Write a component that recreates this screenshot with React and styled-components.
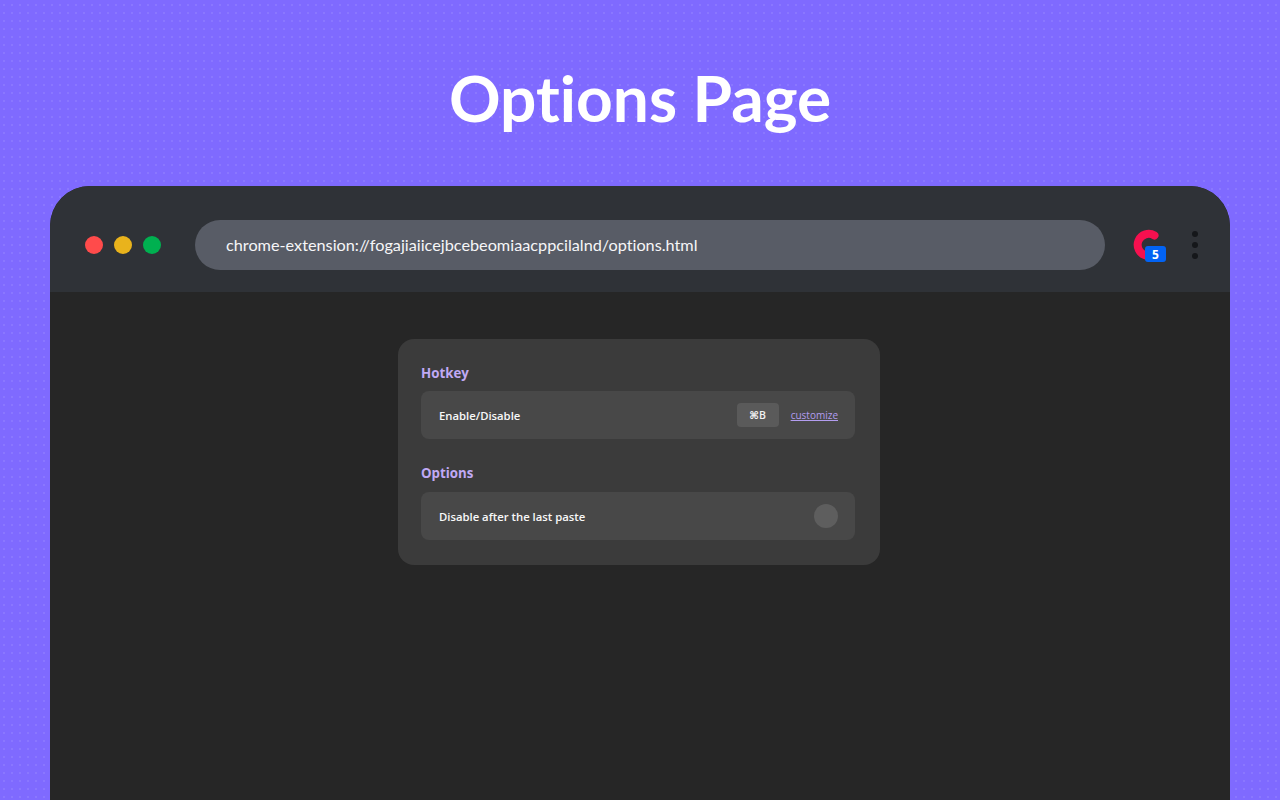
import styled, { createGlobalStyle } from 'styled-components'

const GlobalStyle = createGlobalStyle`
  html, body {
    margin: 0;
    padding: 0;
    height: 100%;
    overflow: hidden;
  }
`

const Page = styled.div`
  width: 1280px;
  height: 800px;
  display: flex;
  flex-direction: column;
  align-items: center;
  overflow: hidden;
  background-color: #7f6aff;
  background-image: conic-gradient(at 2px 2px, transparent 75%, #8a77ff 0);
  background-size: 8px 8px;
  background-position: 3px 4px;
  font-family: 'Lato', 'Liberation Sans', sans-serif;
  font-variant-ligatures: none;
`

const Title = styled.h1`
  margin: 0;
  height: 186px;
  box-sizing: border-box;
  padding-top: 58px;
  font-family: 'Lato', sans-serif;
  font-size: 64px;
  line-height: 80px;
  font-weight: 700;
  color: #fff;
`

const Browser = styled.div`
  width: 1180px;
  flex: 1;
  display: flex;
  flex-direction: column;
  border-radius: 40px 40px 0 0;
  overflow: hidden;
  background: #262626;
`

const Toolbar = styled.div`
  height: 106px;
  flex-shrink: 0;
  box-sizing: border-box;
  display: flex;
  align-items: center;
  padding: 12px 31px 0 35px;
  background: #2f3237;
`

const Lights = styled.div`
  display: flex;
  gap: 11px;
  margin-right: 34px;
`

const Light = styled.span`
  width: 18px;
  height: 18px;
  border-radius: 50%;
  background: ${(p) => p.$color};
`

const AddressBar = styled.div`
  width: 910px;
  height: 50px;
  box-sizing: border-box;
  display: flex;
  align-items: center;
  padding: 0 0 1px 31px;
  border-radius: 25px;
  background: #585c66;
  color: #f6f6f8;
  font-size: 16.25px;
  font-weight: 400;
`

const ExtensionIcon = styled.div`
  position: relative;
  width: 33px;
  height: 32px;
  margin-left: 28px;
`

const Badge = styled.span`
  position: absolute;
  right: 0;
  bottom: -1px;
  width: 21px;
  height: 16px;
  display: flex;
  align-items: center;
  justify-content: center;
  border-radius: 3px;
  background: #0263f4;
  color: #fff;
  font-family: 'Open Sans', sans-serif;
  font-size: 12px;
  font-weight: 700;
`

const Kebab = styled.div`
  display: flex;
  flex-direction: column;
  gap: 5px;
  margin-left: 26px;
`

const KebabDot = styled.span`
  width: 6px;
  height: 6px;
  border-radius: 50%;
  background: #15171a;
`

const Content = styled.div`
  flex: 1;
  display: flex;
  justify-content: center;
  align-items: flex-start;
  padding-top: 47px;
`

const Card = styled.div`
  width: 482px;
  box-sizing: border-box;
  padding: 24px 25px 25px 23px;
  margin-right: 2px;
  border-radius: 16px;
  background: #3b3b3b;
`

const SectionTitle = styled.h2`
  padding-top: ${(p) => (p.$first ? '1px' : '0')};
  font-family: 'Open Sans', sans-serif;
  font-size: 13.3px;
  line-height: 19px;
  font-weight: 700;
  color: #c0a9f5;
  margin: ${(p) => (p.$first ? '0 0 8px' : '25px 0 9px')};
`

const Row = styled.div`
  height: 48px;
  box-sizing: border-box;
  display: flex;
  align-items: center;
  padding: 0 17px 0 18px;
  border-radius: 8px;
  background: #484848;
`

const RowLabel = styled.span`
  flex: 1;
  font-family: 'Open Sans', sans-serif;
  font-size: 11.3px;
  font-weight: 600;
  color: #f8f8f8;
`

const KeyCap = styled.span`
  width: 42px;
  height: 24px;
  display: flex;
  align-items: center;
  justify-content: center;
  border-radius: 4px;
  background: #5a5a5a;
  color: #f2f2f2;
  font-family: 'Open Sans', 'DejaVu Sans', sans-serif;
  font-size: 10.5px;
  font-weight: 600;
`

const CustomizeLink = styled.a`
  margin-left: 12px;
  font-family: 'Open Sans', sans-serif;
  font-size: 10px;
  font-weight: 500;
  color: #b39df0;
  text-decoration: underline;
`

const Toggle = styled.span`
  width: 24px;
  height: 24px;
  border-radius: 50%;
  background: #5e5e5e;
`

const App = () => {
  return (
    <>
      <GlobalStyle />
      <Page>
        <Title>Options Page</Title>
        <Browser>
          <Toolbar>
            <Lights>
              <Light $color="#ff4b4b" />
              <Light $color="#e9b31c" />
              <Light $color="#00b050" />
            </Lights>
            <AddressBar>chrome-extension://fogajiaiicejbcebeomiaacppcilalnd/options.html</AddressBar>
            <ExtensionIcon>
              <svg width="26" height="32" viewBox="-1 0 26 32" fill="none">
                <path
                  d="M20.5 6.5A11 11 0 1 0 12 26.5"
                  stroke="#f6104f"
                  strokeWidth="8"
                  strokeLinecap="round"
                />
              </svg>
              <Badge>5</Badge>
            </ExtensionIcon>
            <Kebab>
              <KebabDot />
              <KebabDot />
              <KebabDot />
            </Kebab>
          </Toolbar>
          <Content>
            <Card>
              <SectionTitle $first>Hotkey</SectionTitle>
              <Row>
                <RowLabel>Enable/Disable</RowLabel>
                <KeyCap>⌘B</KeyCap>
                <CustomizeLink>customize</CustomizeLink>
              </Row>
              <SectionTitle>Options</SectionTitle>
              <Row>
                <RowLabel>Disable after the last paste</RowLabel>
                <Toggle />
              </Row>
            </Card>
          </Content>
        </Browser>
      </Page>
    </>
  )
}

export default App
